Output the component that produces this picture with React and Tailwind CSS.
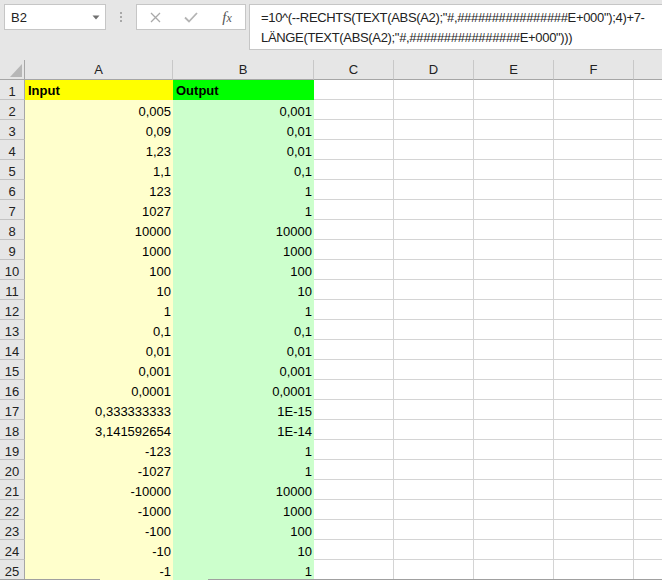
import React from "react";

const dataA = ["0,005","0,09","1,23","1,1","123","1027","10000","1000","100","10","1","0,1","0,01","0,001","0,0001","0,333333333","3,141592654","-123","-1027","-10000","-1000","-100","-10","-1"];
const dataB = ["0,001","0,01","0,01","0,1","1","1","10000","1000","100","10","1","0,1","0,01","0,001","0,0001","1E-15","1E-14","1","1","10000","1000","100","10","1"];

const line1 = '=10^(--RECHTS(TEXT(ABS(A2);"#,################E+000");4)+7-';
const line2 = 'LÄNGE(TEXT(ABS(A2);"#,################E+000")))';

function WhiteCells({ last }) {
  const cls = last
    ? "w-[80px] h-full border-r border-[#d4d4d4] shrink-0"
    : "w-[80px] h-full border-r border-b border-[#d4d4d4] shrink-0";
  return (
    <>
      <div className={cls} />
      <div className={cls} />
      <div className={cls} />
      <div className={cls} />
      <div className={last ? "flex-1 h-full" : "flex-1 h-full border-b border-[#d4d4d4]"} />
    </>
  );
}

export default function App() {
  return (
    <div className="w-[662px] h-[580px] overflow-hidden bg-[#e6e6e6] text-[13px] text-black font-['Liberation_Sans',Arial,sans-serif]">
      {/* Formula bar area */}
      <div className="h-[60px] flex items-start pt-[4px] pl-[4px]">
        <div className="w-[102px] h-[26px] shrink-0 border border-[#c6c6c6] bg-white flex items-center pl-[6px] pr-[5px] justify-between">
          <span className="text-[#222] leading-none">B2</span>
          <svg width="8" height="5" viewBox="0 0 8 5"><path d="M0.5 0.5 L7.5 0.5 L4 4.5 Z" fill="#707070" /></svg>
        </div>
        <div className="w-[30px] h-[26px] shrink-0 flex flex-col items-center pt-[8px] gap-[2px]">
          <div className="w-[2px] h-[2px] bg-[#a8a8a8]" />
          <div className="w-[2px] h-[2px] bg-[#a8a8a8]" />
          <div className="w-[2px] h-[2px] bg-[#a8a8a8]" />
        </div>
        <div className="w-[110px] h-[26px] shrink-0 border border-[#c6c6c6] bg-white flex items-center">
          <div className="w-[36px] h-full flex items-center justify-center">
            <svg width="11" height="11" viewBox="0 0 11 11"><path d="M1 1 L10 10 M10 1 L1 10" stroke="#a9a9a9" strokeWidth="1.3" fill="none" /></svg>
          </div>
          <div className="w-[36px] h-full flex items-center justify-center">
            <svg width="14" height="11" viewBox="0 0 14 11"><path d="M1 5.5 L5 9.5 L13 1" stroke="#b4b4b4" strokeWidth="1.8" fill="none" /></svg>
          </div>
          <div className="w-[36px] h-full flex items-center justify-center">
            <span className="font-['Liberation_Serif',serif] italic text-[#555] text-[15px] leading-none">f<span className="text-[12px]">x</span></span>
          </div>
        </div>
        <div className="ml-[3px] flex-1 h-[46px] border-l border-t border-b border-[#c6c6c6] bg-white pl-[11px] pt-[3px] text-[#222] leading-[20px] tracking-[-0.33px] whitespace-nowrap">
          <div>{line1}</div>
          <div>{line2}</div>
        </div>
      </div>

      {/* Column headers */}
      <div className="h-[20px] flex text-[#222]">
        <div className="w-[25px] h-full shrink-0 border-r border-b border-[#a6a6a6] flex items-end justify-end pr-[2px] pb-[2px]">
          <svg width="12" height="13" viewBox="0 0 12 13"><path d="M12 0 L12 13 L0 13 Z" fill="#b7b7b7" /></svg>
        </div>
        <div className="w-[148px] h-full shrink-0 border-r border-b border-r-[#c8c8c8] border-b-[#a6a6a6] flex items-center justify-center">A</div>
        <div className="w-[141px] h-full shrink-0 border-r border-b border-r-[#c8c8c8] border-b-[#a6a6a6] flex items-center justify-center">B</div>
        <div className="w-[80px] h-full shrink-0 border-r border-b border-r-[#c8c8c8] border-b-[#a6a6a6] flex items-center justify-center">C</div>
        <div className="w-[80px] h-full shrink-0 border-r border-b border-r-[#c8c8c8] border-b-[#a6a6a6] flex items-center justify-center">D</div>
        <div className="w-[80px] h-full shrink-0 border-r border-b border-r-[#c8c8c8] border-b-[#a6a6a6] flex items-center justify-center">E</div>
        <div className="w-[80px] h-full shrink-0 border-r border-b border-r-[#c8c8c8] border-b-[#a6a6a6] flex items-center justify-center">F</div>
        <div className="flex-1 h-full border-b border-[#a6a6a6]" />
      </div>

      {/* Row 1 */}
      <div className="h-[20px] flex bg-white">
        <div className="w-[25px] h-full shrink-0 bg-[#e6e6e6] border-r border-b border-r-[#a6a6a6] border-b-[#c3c3c3] text-center text-[#222] pt-[4px] leading-[15px]">1</div>
        <div className="w-[148px] h-full shrink-0 bg-[#ffff00] font-bold pl-[3px] pt-[3px] leading-[15px]">Input</div>
        <div className="w-[141px] h-full shrink-0 bg-[#00ff00] font-bold pl-[3px] pt-[3px] leading-[15px]">Output</div>
        <WhiteCells />
      </div>

      {dataA.map((a, i) => {
        const last = i === dataA.length - 1;
        return (
          <div key={i} className={last ? "h-[19px] flex bg-white" : "h-[20px] flex bg-white"}>
            <div className={last
              ? "w-[25px] h-full shrink-0 bg-[#e6e6e6] border-r border-[#a6a6a6] text-center text-[#222] pt-[4px] leading-[15px]"
              : "w-[25px] h-full shrink-0 bg-[#e6e6e6] border-r border-b border-r-[#a6a6a6] border-b-[#c3c3c3] text-center text-[#222] pt-[4px] leading-[15px]"}>{i + 2}</div>
            <div className="w-[148px] h-full shrink-0 bg-[#ffffcc] text-right pr-[2px] pt-[4px] leading-[15px]">{a}</div>
            <div className="w-[141px] h-full shrink-0 bg-[#ccffcc] text-right pr-[2px] pt-[4px] leading-[15px]">{dataB[i]}</div>
            <WhiteCells last={last} />
          </div>
        );
      })}

      {/* bottom edge line */}
      <div className="h-[1px] flex">
        <div className="w-[100px] h-full bg-[#a0a0a0]" />
        <div className="w-[73px] h-full bg-[#ffffcc]" />
        <div className="w-[35px] h-full bg-[#ccffcc]" />
        <div className="flex-1 h-full bg-[#a0a0a0]" />
      </div>
    </div>
  );
}
